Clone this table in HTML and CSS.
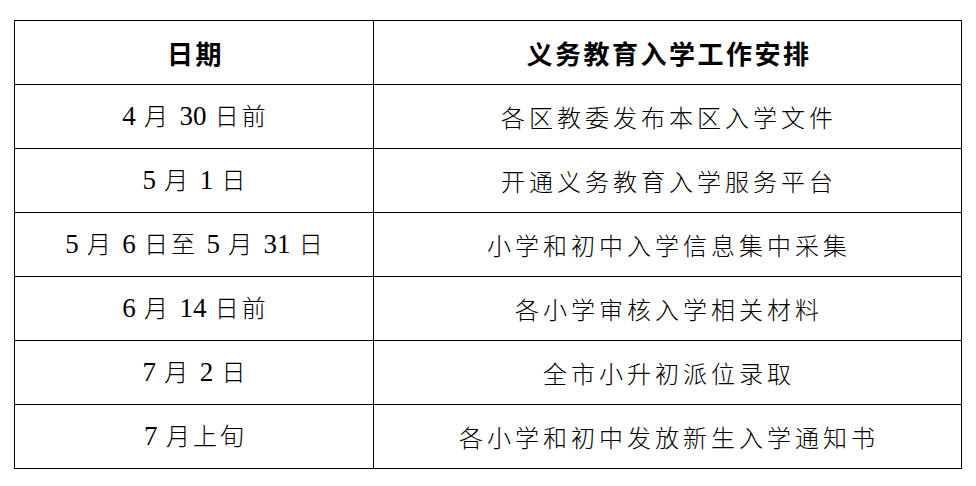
FILE: index.html
```html
<!DOCTYPE html>
<html lang="zh-CN">
<head>
<meta charset="utf-8">
<title>义务教育入学工作安排</title>
<link rel="stylesheet" href="styles.css">
</head>
<body>
<table class="schedule">
  <colgroup>
    <col class="col-date">
    <col class="col-task">
  </colgroup>
  <thead>
    <tr>
      <th>日期</th>
      <th>义务教育入学工作安排</th>
    </tr>
  </thead>
  <tbody>
    <tr>
      <td class="date"><span class="n">4</span> 月 <span class="n">30</span> 日前</td>
      <td>各区教委发布本区入学文件</td>
    </tr>
    <tr>
      <td class="date"><span class="n">5</span> 月 <span class="n">1</span> 日</td>
      <td>开通义务教育入学服务平台</td>
    </tr>
    <tr>
      <td class="date"><span class="n">5</span> 月 <span class="n">6</span> 日至 <span class="n">5</span> 月 <span class="n">31</span> 日</td>
      <td>小学和初中入学信息集中采集</td>
    </tr>
    <tr>
      <td class="date"><span class="n">6</span> 月 <span class="n">14</span> 日前</td>
      <td>各小学审核入学相关材料</td>
    </tr>
    <tr>
      <td class="date"><span class="n">7</span> 月 <span class="n">2</span> 日</td>
      <td>全市小升初派位录取</td>
    </tr>
    <tr>
      <td class="date"><span class="n">7</span> 月上旬</td>
      <td>各小学和初中发放新生入学通知书</td>
    </tr>
  </tbody>
</table>
</body>
</html>
```

FILE: styles.css
```css
html, body {
  margin: 0;
  padding: 0;
  background: #ffffff;
}

body {
  padding: 20px 0 0 14px;
  color: #000000;
  font-family: "Noto Sans CJK SC", "Liberation Serif", serif;
}

.schedule {
  border-collapse: collapse;
  width: 947px;
  table-layout: fixed;
}

.col-date {
  width: 359px;
}

.col-task {
  width: 588px;
}

.schedule th,
.schedule td {
  border: 1px solid #000000;
  height: 64px;
  padding: 0 0 0 3px;
  text-align: center;
  vertical-align: middle;
  box-sizing: border-box;
}

.schedule th {
  font-size: 26px;
  font-weight: 700;
  letter-spacing: 2.5px;
  line-height: 1;
}

.schedule td {
  font-size: 24px;
  font-weight: 300;
  letter-spacing: 4px;
  line-height: 1;
}

.schedule td.date {
  letter-spacing: 3px;
}

.n {
  font-family: "Liberation Serif", serif;
  font-size: 27px;
  font-weight: 400;
  letter-spacing: 0;
}
```
